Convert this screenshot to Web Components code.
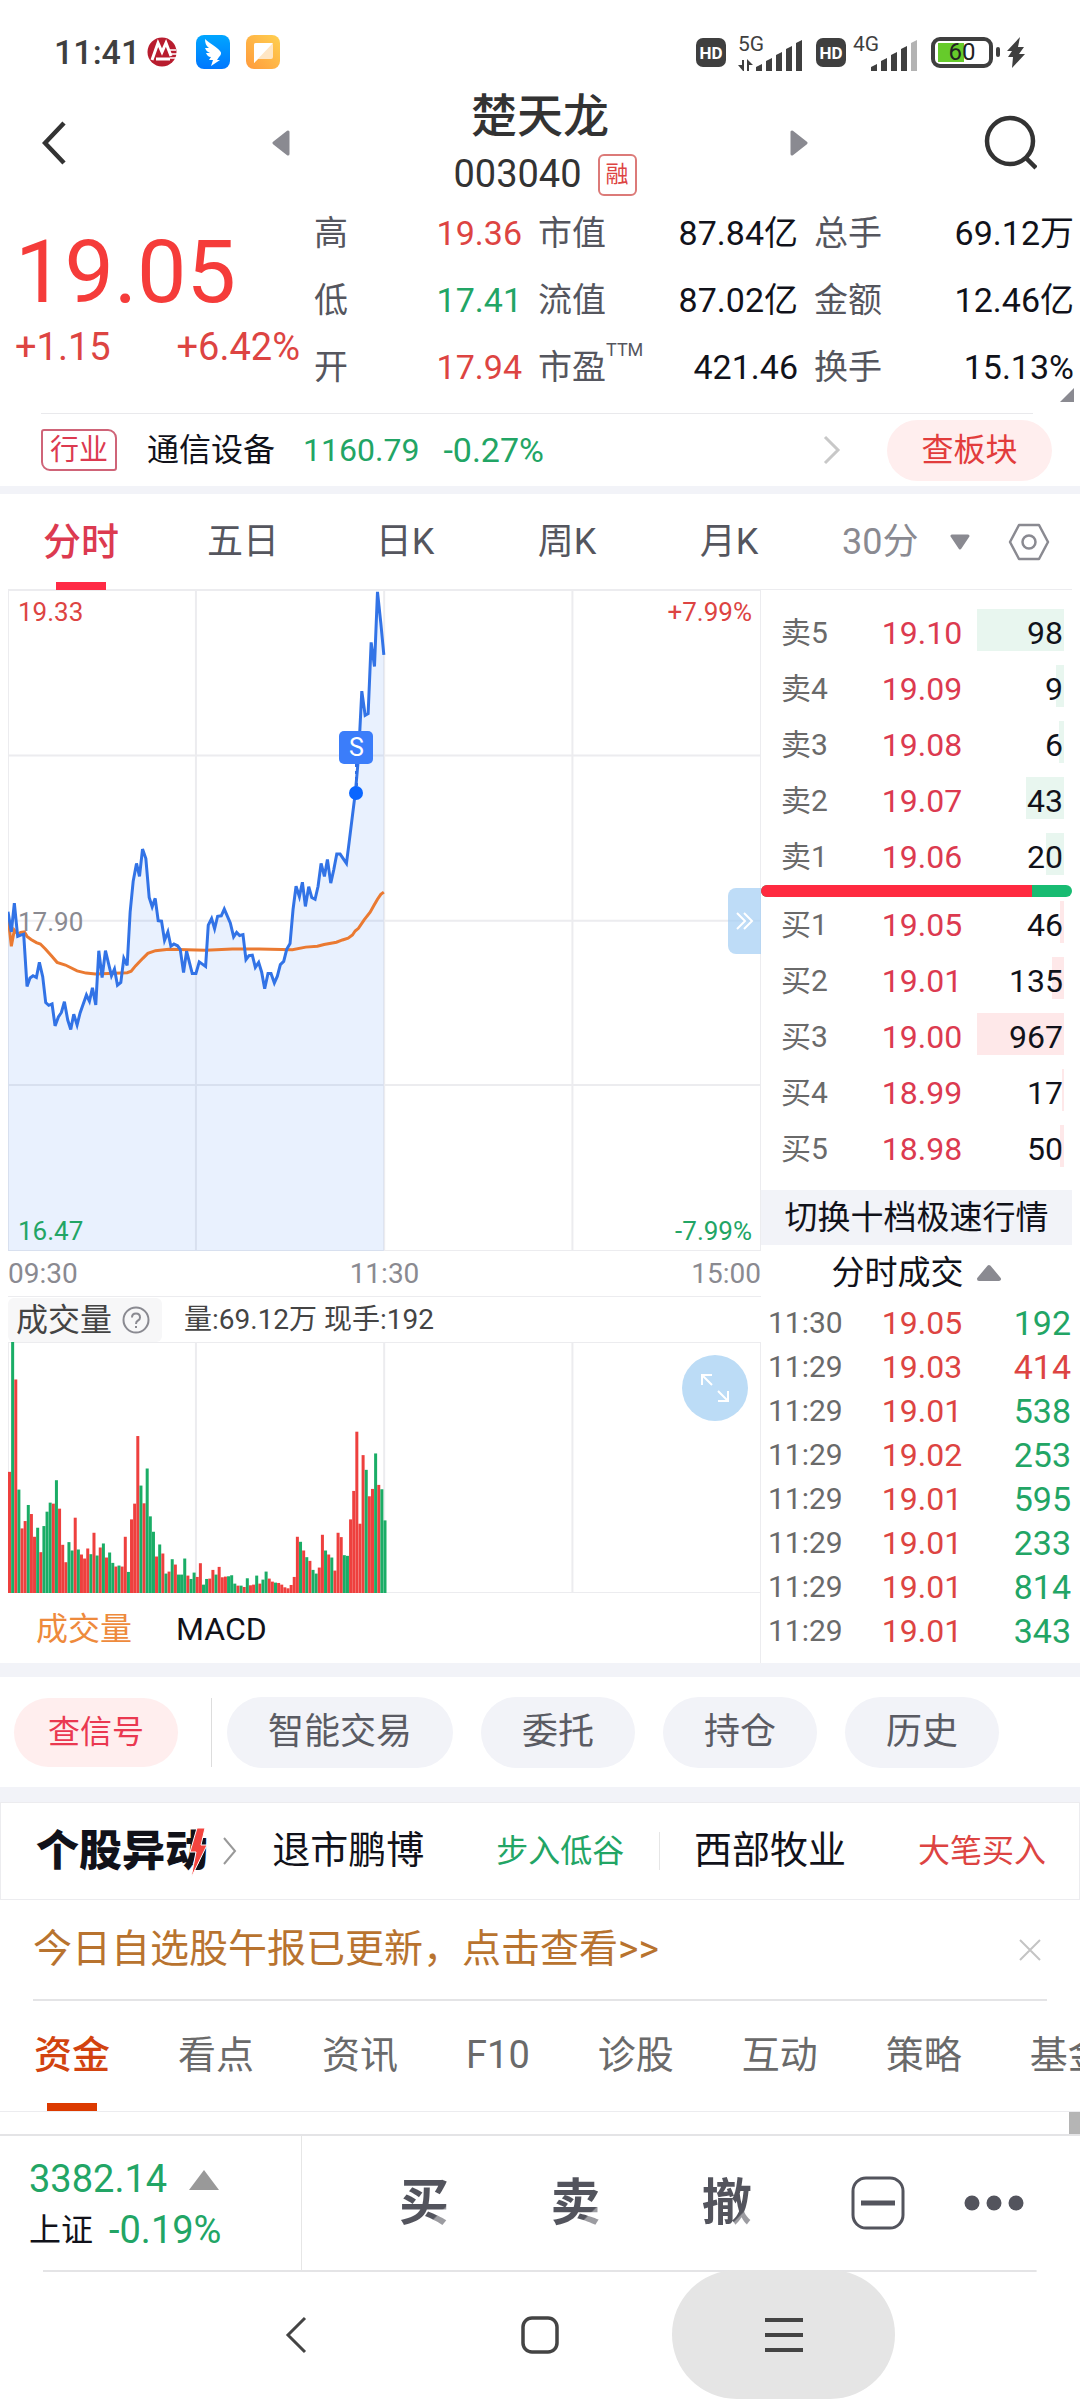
<!DOCTYPE html>
<html lang="zh-CN">
<head>
<meta charset="utf-8">
<meta name="viewport" content="width=device-width, initial-scale=1">
<title>楚天龙 003040</title>
<style>
  :root {
    --red: #dd4442;
    --rose: #dc3a50;
    --green: #22a565;
    --ink: #11121a;
    --text: #55565e;
    --muted: #8a8a91;
    --line: #ececef;
    --band: #f2f3f8;
  }
  body {
    margin: 0;
    background: #fff;
    color: var(--ink);
    font-family: Roboto, "Noto Sans CJK SC", sans-serif;
    font-size: 32px;
    line-height: 1.25;
  }
</style>
</head>
<body>
<stock-page></stock-page>

<script>
// Reset shared by every shadow root
const BASE = `
  * { box-sizing: border-box; }
  :host { display: block; }
  button { font: inherit; color: inherit; background: none; border: 0; padding: 0; margin: 0; cursor: pointer; }
  a { color: inherit; text-decoration: none; }
  svg { display: block; flex: none; }
  table { border-collapse: collapse; width: 100%; }
  th { font-weight: 400; text-align: left; }
  td, th { padding: 0; }
`;

class BaseElement extends HTMLElement {
  constructor() {
    super();
    this.attachShadow({ mode: "open" });
  }
  connectedCallback() {
    this.shadowRoot.innerHTML = `<style>${BASE}${this.styles()}</style>${this.markup()}`;
  }
  styles() { return ""; }
  markup() { return "<slot></slot>"; }
}

class StatusBar extends BaseElement {
  styles() {
    return `
      :host { display: flex; justify-content: space-between; align-items: center; height: 82px; padding: 22px 54px 0 54px; color: #3f3f3f; }
      .side { display: flex; align-items: center; }
      time { font-size: 34px; font-weight: 500; line-height: 40px; margin-right: 6px; }
      .apps { display: flex; align-items: center; gap: 16px; }
      .hd { width: 30px; height: 29px; border-radius: 7px; background: #3f3f3f; color: #fff; font-size: 17px; font-weight: 700; line-height: 30px; text-align: center; }
      .signal { display: grid; margin: 0 12px; height: 37px; }
      .second { margin-left: 7px; }
      .signal span { grid-area: 1 / 1; font-size: 21px; line-height: 20px; z-index: 1; }
      .signal svg { grid-area: 1 / 1; align-self: end; }
      .battery { display: flex; align-items: center; margin-right: 6px; }
      .cell { width: 62px; height: 31px; border: 4px solid #3f3f3f; border-radius: 9px; text-align: center; font-size: 24px; line-height: 23px; color: #222; padding: 0 3px;
        background: linear-gradient(90deg, #66cb2b 54%, transparent 54%) 3px 2px / 48px 19px no-repeat; }
      .nub { width: 4px; height: 10px; margin-left: 3px; border-radius: 2px; background: #3f3f3f; }
    `;
  }
  bars(last) {
    return [7, 13, 19, 25, 31].map((h, i) =>
      `<path d="M${18 + i * 10} 32v-${h - 3}l6-3v${h}z" fill="${i === 4 ? last : "#3f3f3f"}"/>`).join("");
  }
  markup() {
    return `
      <div class="side">
        <time>11:41</time>
        <div class="apps">
          <svg width="34" height="34" viewBox="0 0 34 34"><circle cx="16" cy="17" r="14.500" fill="#b81c2e"/><path d="M6 25 12 8l4 9 4-9 5 13M10 24h14" fill="none" stroke="#fff" stroke-width="3"/><path d="M22 15h8M23 19h8M24 23h6" stroke="#fff" stroke-width="1.500"/></svg>
          <svg width="34" height="34" viewBox="0 0 34 34"><defs><linearGradient id="a" x2="0" y2="1"><stop stop-color="#00a6ff"/><stop offset="1" stop-color="#0077ff"/></linearGradient></defs><rect width="34" height="34" rx="8" fill="url(#a)"/><path d="M9 4c4 4 12 8 15 12 2 2 1 4-1 6l-2 3h3l-9 6 2-6h-4l2-3c-3 0-4-2-5-4h4c-3-1-4-3-5-5h4c-3-2-4-5-4-9z" fill="#fff"/></svg>
          <svg width="34" height="34" viewBox="0 0 34 34"><defs><linearGradient id="b" x1="1" x2="0" y2="1"><stop stop-color="#ffd050"/><stop offset="1" stop-color="#ff9a3c"/></linearGradient></defs><rect width="34" height="34" rx="8" fill="url(#b)"/><path d="M8 10q0-2 2-2h15q2 0 2 2v12q0 2-2 2H12l-4 4z" fill="#ffe6c4"/><path d="M8 28V10q0-2 2-2h17z" fill="#fff"/></svg>
        </div>
      </div>
      <div class="side">
        <div class="hd">HD</div>
        <div class="signal"><span>5G</span><svg width="66" height="32" viewBox="0 0 66 32">${this.bars("#3f3f3f")}<path d="M0 26h4v-5h2v11H5zM9 32V20l6 6h-4v6zM6 21v11" fill="#3f3f3f"/></svg></div>
        <div class="hd">HD</div>
        <div class="signal second"><span>4G</span><svg width="66" height="32" viewBox="0 0 66 32">${this.bars("#b3b3b3")}</svg></div>
        <div class="battery"><div class="cell">60</div><div class="nub"></div></div>
        <svg width="20" height="31" viewBox="0 0 20 31"><path d="M14 0 1 14h5L2 20h5L6 31 19 17h-6l5-7h-6z" fill="#3f3f3f"/></svg>
      </div>
    `;
  }
}

class StockHeader extends BaseElement {
  styles() {
    return `
      :host { display: grid; grid-template-columns: 160px 1fr 277px 1fr 160px; align-items: center; height: 118px; color: #333; }
      button { display: flex; justify-content: center; }
      .back { justify-content: flex-start; padding-left: 42px; }
      .search { justify-content: flex-end; padding-right: 43px; }
      .title { text-align: center; padding-top: 3px; }
      h1 { margin: 0; font-size: 46px; font-weight: 500; line-height: 62px; }
      .code { display: flex; justify-content: center; align-items: center; gap: 16px; height: 56px; padding-left: 10px; font-size: 38px; }
      .badge { border: 2px solid #dc7a78; border-radius: 6px; padding: 0 6px; color: var(--red); font-size: 23px; line-height: 38px; }
    `;
  }
  markup() {
    return `
      <button class="back" aria-label="返回"><svg width="26" height="44" viewBox="0 0 26 44"><path d="M22 2 3 22l19 20" fill="none" stroke="#333" stroke-width="4.500"/></svg></button>
      <button aria-label="上一只"><svg width="18" height="26" viewBox="0 0 18 26"><path d="M16 2v22L2 13z" fill="#8a8a91" stroke="#8a8a91" stroke-width="3" stroke-linejoin="round"/></svg></button>
      <div class="title">
        <h1>楚天龙</h1>
        <div class="code"><span>003040</span><span class="badge">融</span></div>
      </div>
      <button aria-label="下一只"><svg width="18" height="26" viewBox="0 0 18 26"><path d="M2 2v22l14-11z" fill="#8a8a91" stroke="#8a8a91" stroke-width="3" stroke-linejoin="round"/></svg></button>
      <button class="search" aria-label="搜索"><svg width="54" height="56" viewBox="0 0 54 56"><circle cx="27" cy="26" r="23" fill="none" stroke="#333" stroke-width="4.500"/><path d="m42 42 11 11" stroke="#333" stroke-width="4.500"/></svg></button>
    `;
  }
}

class QuotePanel extends BaseElement {
  styles() {
    return `
      :host { display: grid; grid-template-columns: 314fr 760fr; padding-right: 6px; position: relative; height: 213px; }
      .price { padding-left: 15px; color: var(--red); }
      .last { font-size: 88px; line-height: 100px; padding-top: 22px; color: #f53c3a; }
      .change { display: flex; justify-content: space-between; padding-right: 14px; font-size: 38px; line-height: 50px; }
      dl { margin: 0; display: grid; grid-template-columns: 208fr 260fr 260fr; grid-auto-rows: 67px; column-gap: 16px; font-size: 34px; line-height: 67px; }
      dl div { display: flex; justify-content: space-between; }
      dt { color: var(--text); display: flex; }
      dd { margin: 0; }
      .up { color: var(--red); }
      .down { color: var(--green); }
      sup { font-size: 18px; line-height: 32px; }
      .corner { position: absolute; right: 6px; bottom: 11px; }
    `;
  }
  markup() {
    const stats = [
      ["高", "19.36", "up"], ["市值", "87.84亿"], ["总手", "69.12万"],
      ["低", "17.41", "down"], ["流值", "87.02亿"], ["金额", "12.46亿"],
      ["开", "17.94", "up"], ["市盈<sup>TTM</sup>", "421.46"], ["换手", "15.13%"],
    ];
    return `
      <div class="price">
        <div class="last">19.05</div>
        <div class="change"><span>+1.15</span><span>+6.42%</span></div>
      </div>
      <dl>${stats.map(([k, v, c = ""]) => `<div><dt>${k}</dt><dd class="${c}">${v}</dd></div>`).join("")}</dl>
      <svg class="corner" width="14" height="14" viewBox="0 0 14 14"><path d="M14 0v14H0z" fill="#8a8a91"/></svg>
    `;
  }
}

class IndustryRow extends BaseElement {
  styles() {
    return `
      :host { display: flex; align-items: center; margin: 0 28px 0 41px; height: 73px; border-top: 1px solid var(--line);
        border-image: linear-gradient(90deg, #e9e9ec 98%, transparent 98%) 1; }
      .tag { border: 2px solid #cf6478; border-radius: 3px 9px 3px 9px; padding: 0 7px; font-size: 29px; line-height: 38px; color: var(--rose); }
      .name { margin: 0 28px 0 30px; }
      .down { color: var(--green); margin-right: 24px; }
      .pct { font-size: 34px; }
      .arrow { margin: 0 46px 0 auto; }
      button { width: 165px; height: 61px; border-radius: 31px; background: #ffeeee; color: #e23c3c; }
    `;
  }
  markup() {
    return `
      <span class="tag">行业</span><span class="name">通信设备</span>
      <span class="down">1160.79</span><span class="down pct">-0.27%</span>
      <svg class="arrow" width="18" height="30" viewBox="0 0 18 30"><path d="m2 2 13 13L2 28" fill="none" stroke="#c8c8c8" stroke-width="3"/></svg>
      <button>查板块</button>
    `;
  }
}

class PeriodTabs extends BaseElement {
  styles() {
    return `
      :host { border-top: 8px solid var(--band); }
      nav { display: flex; align-items: center; height: 96px; margin: 0 8px; border-bottom: 1px solid var(--line); font-size: 36px; color: var(--text); }
      button { height: 96px; line-height: 96px; }
      .tab { flex: 0 0 162px; }
      .tab:first-child { margin-left: -8px; }
      .tab.on { color: var(--rose); font-weight: 500; font-size: 38px; background: linear-gradient(#ff2a45, #ff2a45) no-repeat center bottom / 50px 8px; }
      .more { display: flex; align-items: center; gap: 32px; color: var(--muted); margin-left: 32px; }
      .gear { display: flex; align-items: center; margin-left: auto; margin-right: 22px; }
    `;
  }
  markup() {
    return `
      <nav>
        ${["分时", "五日", "日K", "周K", "月K"].map((t, i) => `<button class="tab ${i ? "" : "on"}">${t}</button>`).join("")}
        <button class="more">30分<svg width="20" height="16" viewBox="0 0 20 16"><path d="M2 2h16l-8 12z" fill="#8a8a91" stroke="#8a8a91" stroke-width="3" stroke-linejoin="round"/></svg></button>
        <button class="gear" aria-label="设置"><svg width="42" height="38" viewBox="0 0 42 38"><path d="M11 2h20l9 17-9 17H11L2 19z" fill="none" stroke="#8a8a91" stroke-width="2.500" stroke-linejoin="round"/><circle cx="21" cy="19" r="6.500" fill="none" stroke="#8a8a91" stroke-width="2.500"/></svg></button>
      </nav>
    `;
  }
}

const PRICE = "28,745 38,790 47,726 57,800 66,797 75,795 85,912 94,893 103,888 113,892 122,858 132,890 141,948 150,954 160,951 169,1000 179,980 188,970 197,946 207,987 216,1008 225,974 235,998 244,971 263,931 272,945 281,915 291,953 300,832 310,892 320,832 338,888 347,873 356,909 366,903 375,849 385,865 394,745 403,677 413,637 422,666 431,605 441,626 451,713 460,734 469,715 478,765 488,766 497,809 507,790 516,822 525,817 536,821 544,829 554,881 563,833 580,883 591,883 601,857 620,867 628,775 638,760 647,783 656,755 667,754 676,739 694,770 704,801 713,791 722,798 732,796 741,852 750,843 760,842 769,869 779,858 788,880 797,917 807,883 816,883 826,904 835,889 844,863 854,856 863,829 873,816 882,740 891,688 901,711 910,679 919,733 929,689 938,713 948,717 957,688 966,637 976,666 985,628 995,681 1004,651 1013,616 1023,616 1042,637 1050,590 1069,476 1078,400 1088,252 1098,306 1107,302 1116,143 1126,197 1135,30 1145,100 1154,171";
const AVERAGE = "28,755 38,822 47,786 57,795 66,791 77,790 85,800 97,807 113,814 125,817 140,828 160,845 175,858 200,864 235,877 262,882 290,884 385,881 397,878 410,866 432,849 447,838 470,832 510,829 620,831 700,828 780,828 880,830 920,824 955,822 975,818 1012,813 1030,808 1047,804 1060,797 1068,788 1078,782 1095,763 1113,746 1125,730 1135,717 1145,706 1154,701";

class PriceChart extends BaseElement {
  styles() {
    return `
      .plot { position: relative; height: 661px; }
      .plot > svg { width: 100%; height: 100%; }
      .label { position: absolute; font-size: 26px; line-height: 30px; }
      .tl { left: 10px; top: 7px; color: var(--red); }
      .tr { right: 9px; top: 7px; color: var(--red); }
      .ml { left: 10px; top: 317px; color: var(--muted); }
      .bl { left: 10px; bottom: 5px; color: var(--green); }
      .br { right: 9px; bottom: 5px; color: var(--green); }
      .marker { position: absolute; left: 44%; top: 141px; display: flex; flex-direction: column; align-items: center; }
      .marker b { width: 34px; height: 33px; border-radius: 5px; background: #3b7dfa; color: #fff; font-weight: 400; font-size: 25px; line-height: 34px; text-align: center; }
      .marker i { height: 22px; border-left: 3px dotted #2f6fe4; }
      .marker u { width: 14px; height: 14px; border-radius: 50%; background: #0a66ff; }
      .expand { position: absolute; right: 0; top: 298px; width: 33px; height: 66px; border-radius: 8px 0 0 8px; background: rgba(163, 205, 243, .7); display: flex; align-items: center; justify-content: center; }
      .axis { display: flex; justify-content: space-between; height: 45px; line-height: 46px; font-size: 28px; color: var(--muted); }
    `;
  }
  markup() {
    return `
      <div class="plot">
        <svg viewBox="28 26 2256 1477" preserveAspectRatio="none">
          <g stroke="#ececef" stroke-width="2" fill="none">
            <path vector-effect="non-scaling-stroke" d="M28 396h2256M28 765h2256M28 1132h2256M591 26v1477M1155 26v1477M1719 26v1477"/>
            <path vector-effect="non-scaling-stroke" d="M28 26h2256v1477H28z"/>
          </g>
          <polygon points="${PRICE} 1154,1503 28,1503" fill="#3b7dfa" fill-opacity=".11"/>
          <polyline points="${AVERAGE}" fill="none" stroke="#ea7a32" stroke-width="3" vector-effect="non-scaling-stroke"/>
          <polyline points="${PRICE}" fill="none" stroke="#3273e6" stroke-width="3" vector-effect="non-scaling-stroke"/>
        </svg>
        <span class="label tl">19.33</span><span class="label tr">+7.99%</span>
        <span class="label ml">17.90</span>
        <span class="label bl">16.47</span><span class="label br">-7.99%</span>
        <div class="marker"><b>S</b><i></i><u></u></div>
        <button class="expand" aria-label="收起盘口"><svg width="20" height="20" viewBox="0 0 20 20"><path d="m2 2 8 8-8 8M9 2l8 8-8 8" fill="none" stroke="#fff" stroke-width="2"/></svg></button>
      </div>
      <div class="axis"><span>09:30</span><span>11:30</span><span>15:00</span></div>
    `;
  }
}

// One bar per minute: colour letter and height out of 750
const VOLUME = "r362 g750 r638 g309 r193 r215 g263 r236 r168 g195 r122 g200 g243 g270 r267 g337 r252 r144 r92 g152 g127 r225 g130 r115 r103 r133 g116 r180 g112 r136 g148 r106 g121 g90 r79 g82 r79 r168 g63 r220 r267 r469 g321 r268 g372 g229 g183 r109 g145 r118 g58 r64 g101 r85 g55 g55 g103 r52 g42 g61 r48 r89 g25 g42 r43 r69 g55 r78 r47 r49 g50 g53 g28 r22 g22 r18 g44 r23 r25 g52 r28 g40 g64 r43 r34 g31 r30 r25 r17 r14 r24 r48 r168 g153 r127 g107 r96 g69 g58 r76 r174 g127 r115 g106 r67 r180 r167 g113 g111 r220 r305 r482 r207 r412 g368 r289 r311 g417 r323 g310 g217";

class VolumeChart extends BaseElement {
  styles() {
    return `
      header { display: flex; align-items: center; height: 46px; border-top: 1px solid var(--line); color: #444; font-size: 28px; }
      .pick { display: flex; align-items: center; gap: 10px; width: 154px; height: 44px; padding-left: 8px; margin-right: 22px; border-radius: 6px; background: #f7f7f8; font-size: 32px; }
      .plot { position: relative; height: 251px; }
      .plot > svg { width: 100%; height: 100%; }
      .full { position: absolute; right: 13px; top: 13px; width: 66px; height: 66px; border-radius: 50%; background: #bcdcf6; display: flex; align-items: center; justify-content: center; }
      nav { display: flex; gap: 44px; height: 70px; padding: 2px 0 0 28px; border-right: 1px solid var(--line); }
      .on { color: #ee8a3c; }
    `;
  }
  markup() {
    const bars = VOLUME.split(" ").map((v, i) => {
      const h = Number(v.slice(1));
      return `<rect x="${(i * 9.375).toFixed(1)}" y="${750 - h}" width="9" height="${h}" fill="${v[0] === "r" ? "#ee403e" : "#1aad66"}"/>`;
    });
    return `
      <header>
        <button class="pick">成交量<svg width="28" height="28" viewBox="0 0 28 28"><circle cx="14" cy="14" r="12.500" fill="none" stroke="#8a8a91" stroke-width="2"/><path d="M10 11.500q0-4 4-4t4 4q0 2-2 3-2 1-2 3.500M14 20v2" fill="none" stroke="#8a8a91" stroke-width="2"/></svg></button>
        <span>量:69.12万 现手:192</span>
      </header>
      <div class="plot">
        <svg viewBox="0 0 2256 750" preserveAspectRatio="none">
          <path d="M0 0h2256v750H0zM563 0v750M1127 0v750M1691 0v750" fill="none" stroke="#ececef" stroke-width="2" vector-effect="non-scaling-stroke"/>
          ${bars.join("")}
        </svg>
        <button class="full" aria-label="全屏"><svg width="32" height="32" viewBox="0 0 32 32"><path d="M3 13V3h10M3 3l10 10M29 19v10H19M29 29 19 19" fill="none" stroke="#fff" stroke-width="2"/></svg></button>
      </div>
      <nav><button class="on">成交量</button><button>MACD</button></nav>
    `;
  }
}

class OrderBook extends BaseElement {
  styles() {
    return `
      :host { padding-top: 15px; }
      table { table-layout: fixed; }
      tr { height: 56px; }
      th { width: 108px; padding-left: 20px; font-size: 30px; color: #6a6a6a; }
      .p { width: 106px; text-align: center; color: var(--rose); }
      .q { padding-right: 9px; text-align: right; background: linear-gradient(var(--tint), var(--tint)) no-repeat right 8px top 4px / var(--w) 42px; }
      .sell { --tint: #e8f6ef; }
      .buy { --tint: #fee8e9; }
      .ratio { display: flex; height: 12px; border-radius: 6px; overflow: hidden; background: #18bb72; }
      .ratio i { width: 87%; background: #ff2a40; }
      .switch { display: block; width: 100%; height: 55px; margin-top: 13px; background: var(--band); white-space: nowrap; font-size: 33px; }
    `;
  }
  table(side, rows) {
    return `<table class="${side}">${rows.map(([n, p, q, w]) =>
      `<tr><th scope="row">${n}</th><td class="p">${p}</td><td class="q" style="--w:${w}px">${q}</td></tr>`).join("")}</table>`;
  }
  markup() {
    return `
      ${this.table("sell", [["卖5", "19.10", 98, 87], ["卖4", "19.09", 9, 8], ["卖3", "19.08", 6, 5], ["卖2", "19.07", 43, 38], ["卖1", "19.06", 20, 18]])}
      <div class="ratio"><i></i></div>
      ${this.table("buy", [["买1", "19.05", 46, 4], ["买2", "19.01", 135, 12], ["买3", "19.00", 967, 87], ["买4", "18.99", 17, 2], ["买5", "18.98", 50, 4]])}
      <button class="switch">切换十档极速行情</button>
    `;
  }
}

class TickList extends BaseElement {
  styles() {
    return `
      .head { display: flex; align-items: center; justify-content: center; gap: 12px; width: 100%; height: 56px; font-size: 33px; }
      .list { height: 362px; overflow: hidden; }
      table { table-layout: fixed; }
      td { height: 44px; line-height: 44px; }
      .t { width: 108px; padding-left: 7px; font-size: 30px; color: #6a6a6a; }
      .p { width: 106px; text-align: center; color: var(--red); }
      .v { text-align: right; padding-right: 1px; font-size: 34px; }
      .up { color: var(--red); }
      .down { color: var(--green); }
    `;
  }
  markup() {
    const ticks = [
      ["11:30", "19.05", 192, "down"], ["11:29", "19.03", 414, "up"], ["11:29", "19.01", 538, "down"],
      ["11:29", "19.02", 253, "down"], ["11:29", "19.01", 595, "down"], ["11:29", "19.01", 233, "down"],
      ["11:29", "19.01", 814, "down"], ["11:29", "19.01", 343, "down"], ["11:29", "19.05", 550, "down"],
    ];
    return `
      <button class="head">分时成交<svg width="26" height="18" viewBox="0 0 26 18"><path d="M3 15 13 3l10 12z" fill="#8a8a91" stroke="#8a8a91" stroke-width="4" stroke-linejoin="round"/></svg></button>
      <div class="list"><table>${ticks.map(([t, p, v, c]) => `<tr><td class="t">${t}</td><td class="p">${p}</td><td class="v ${c}">${v}</td></tr>`).join("")}</table></div>
    `;
  }
}

class ActionBar extends BaseElement {
  styles() {
    return `
      :host { display: flex; align-items: center; gap: 28px; height: 139px; padding-left: 14px; border-top: 14px solid var(--band); border-bottom: 15px solid var(--band); font-size: 36px; color: #5a5b63; }
      button { height: 71px; padding: 0 41px; border-radius: 36px; background: var(--band); }
      .signal { height: 69px; padding: 0 34px; background: #ffeeee; color: #ea3850; font-size: 32px; }
      .bar { width: 1px; height: 69px; background: #ddd; margin: 0 -13px 0 5px; }
    `;
  }
  markup() {
    return `<button class="signal">查信号</button><span class="bar"></span>
      ${["智能交易", "委托", "持仓", "历史"].map((t) => `<button>${t}</button>`).join("")}`;
  }
}

class MoverStrip extends BaseElement {
  styles() {
    return `
      :host { display: flex; align-items: center; justify-content: space-between; height: 98px; padding: 0 33px 0 35px; border: 1px solid var(--line); }
      .logo { position: relative; font-size: 43px; font-weight: 900; line-height: 64px; }
      .logo svg { position: absolute; right: 0; top: 9px; }
      .head { display: flex; align-items: center; gap: 14px; }
      a { display: flex; align-items: center; gap: 72px; }
      b { font-weight: 400; font-size: 38px; }
      .down { color: var(--green); }
      .up { color: var(--red); }
      .bar { width: 1px; height: 38px; background: #e6e6e6; }
    `;
  }
  markup() {
    return `
      <div class="head">
        <span class="logo">个股异动<svg width="20" height="50" viewBox="0 0 20 50"><path d="M9 0h8l-4 17h6L3 50l5-26H2z" fill="#f4453f" stroke="#fff"/></svg></span>
        <svg width="16" height="30" viewBox="0 0 16 30"><path d="m2 2 11 13L2 28" fill="none" stroke="#999" stroke-width="2"/></svg>
      </div>
      <a href="#"><b>退市鹏博</b><span class="down">步入低谷</span></a>
      <span class="bar"></span>
      <a href="#"><b>西部牧业</b><span class="up">大笔买入</span></a>
    `;
  }
}

class NoticeBar extends BaseElement {
  styles() {
    return `
      :host { display: flex; align-items: center; justify-content: space-between; height: 101px; margin: 0 33px; border-bottom: 2px solid #e4e4e6; }
      a { color: #b8732f; font-size: 39px; }
      button { padding-right: 6px; }
    `;
  }
  markup() {
    return `<a href="#">今日自选股午报已更新，点击查看&gt;&gt;</a>
      <button aria-label="关闭"><svg width="22" height="22" viewBox="0 0 22 22"><path d="m1 1 20 20M21 1 1 21" stroke="#c4c4c4" stroke-width="2"/></svg></button>`;
  }
}

class InfoTabs extends BaseElement {
  styles() {
    return `
      nav { display: flex; gap: 68px; height: 111px; padding-left: 34px; overflow: hidden; border-bottom: 1px solid var(--line); font-size: 38px; color: #6a6a6a; }
      button { flex: none; height: 110px; }
      .on { color: #d2430f; font-weight: 500; background: linear-gradient(#dc3a00, #dc3a00) no-repeat center bottom / 50px 8px; }
      .peek { height: 22px; background: linear-gradient(#b5b5b5, #b5b5b5) no-repeat right / 11px 22px; }
    `;
  }
  markup() {
    return `<nav>${["资金", "看点", "资讯", "F10", "诊股", "互动", "策略", "基金"].map((t, i) =>
      `<button class="${i ? "" : "on"}">${t}</button>`).join("")}</nav><div class="peek"></div>`;
  }
}

class TradeBar extends BaseElement {
  styles() {
    return `
      :host { display: flex; height: 136px; border-top: 2px solid #e4e4e6; }
      .index { flex: 0 0 28%; padding: 18px 0 0 29px; border-right: 1px solid #e6e6e6; line-height: 51px; }
      .index div { display: flex; align-items: center; gap: 16px; }
      .index svg { margin-left: 6px; }
      .down { color: var(--green); font-size: 38px; }
      .acts { flex: 1; display: grid; grid-template-columns: repeat(4, 151fr) 81fr; align-items: center; justify-items: center; padding: 0 45px 0 46px; }
      .order { font-size: 50px; font-weight: 700; color: transparent; background: linear-gradient(135deg, #53545d 72%, #9c9ca1 74%); -webkit-background-clip: text; background-clip: text; }
    `;
  }
  markup() {
    return `
      <div class="index">
        <div><span class="down">3382.14</span><svg width="30" height="20" viewBox="0 0 30 20"><path d="M15 0 30 20H0z" fill="#999"/></svg></div>
        <div><span>上证</span><span class="down">-0.19%</span></div>
      </div>
      <div class="acts">
        <button class="order">买</button><button class="order">卖</button><button class="order">撤</button>
        <button aria-label="收起"><svg width="54" height="54" viewBox="0 0 54 54"><rect x="2" y="2" width="50" height="50" rx="13" fill="none" stroke="#53545d" stroke-width="3"/><path d="M10 27h34" stroke="#53545d" stroke-width="5"/></svg></button>
        <button aria-label="更多"><svg width="60" height="16" viewBox="0 0 60 16"><g fill="#53545d"><circle cx="8" cy="8" r="7.500"/><circle cx="30" cy="8" r="7.500"/><circle cx="52" cy="8" r="7.500"/></g></svg></button>
      </div>
    `;
  }
}

class SystemNav extends BaseElement {
  styles() {
    return `
      :host { display: grid; grid-template-columns: 174fr 244fr 244fr 10fr 223fr 185fr; height: 129px; background: linear-gradient(#e4e4e6, #e4e4e6) no-repeat center top / 92% 2px; }
      button { display: flex; align-items: center; justify-content: center; }
      .back { grid-column: 2; }
      .menu { grid-column: 5; background: #e5e5e5; border-radius: 65px; }
    `;
  }
  markup() {
    return `
      <button class="back" aria-label="返回"><svg width="22" height="38" viewBox="0 0 22 38"><path d="M20 2 3 19l17 17" fill="none" stroke="#444" stroke-width="3"/></svg></button>
      <button aria-label="主页"><svg width="38" height="38" viewBox="0 0 38 38"><rect x="2" y="2" width="34" height="34" rx="9" fill="none" stroke="#444" stroke-width="3.500"/></svg></button>
      <button class="menu" aria-label="最近任务"><svg width="38" height="34" viewBox="0 0 38 34"><path d="M0 2h38M0 17h38M0 32h38" stroke="#444" stroke-width="4"/></svg></button>
    `;
  }
}

class StockPage extends BaseElement {
  styles() {
    return `
      .market { display: grid; grid-template-columns: 753fr 311fr; padding: 0 8px; }
      .market > * { min-width: 0; }
    `;
  }
  markup() {
    return `
      <status-bar></status-bar>
      <stock-header></stock-header>
      <quote-panel></quote-panel>
      <industry-row></industry-row>
      <period-tabs></period-tabs>
      <div class="market">
        <div><price-chart></price-chart><volume-chart></volume-chart></div>
        <div><order-book></order-book><tick-list></tick-list></div>
      </div>
      <action-bar></action-bar>
      <mover-strip></mover-strip>
      <notice-bar></notice-bar>
      <info-tabs></info-tabs>
      <trade-bar></trade-bar>
      <system-nav></system-nav>
    `;
  }
}

customElements.define("status-bar", StatusBar);
customElements.define("stock-header", StockHeader);
customElements.define("quote-panel", QuotePanel);
customElements.define("industry-row", IndustryRow);
customElements.define("period-tabs", PeriodTabs);
customElements.define("price-chart", PriceChart);
customElements.define("volume-chart", VolumeChart);
customElements.define("order-book", OrderBook);
customElements.define("tick-list", TickList);
customElements.define("action-bar", ActionBar);
customElements.define("mover-strip", MoverStrip);
customElements.define("notice-bar", NoticeBar);
customElements.define("info-tabs", InfoTabs);
customElements.define("trade-bar", TradeBar);
customElements.define("system-nav", SystemNav);
customElements.define("stock-page", StockPage);
</script>
</body>
</html>
